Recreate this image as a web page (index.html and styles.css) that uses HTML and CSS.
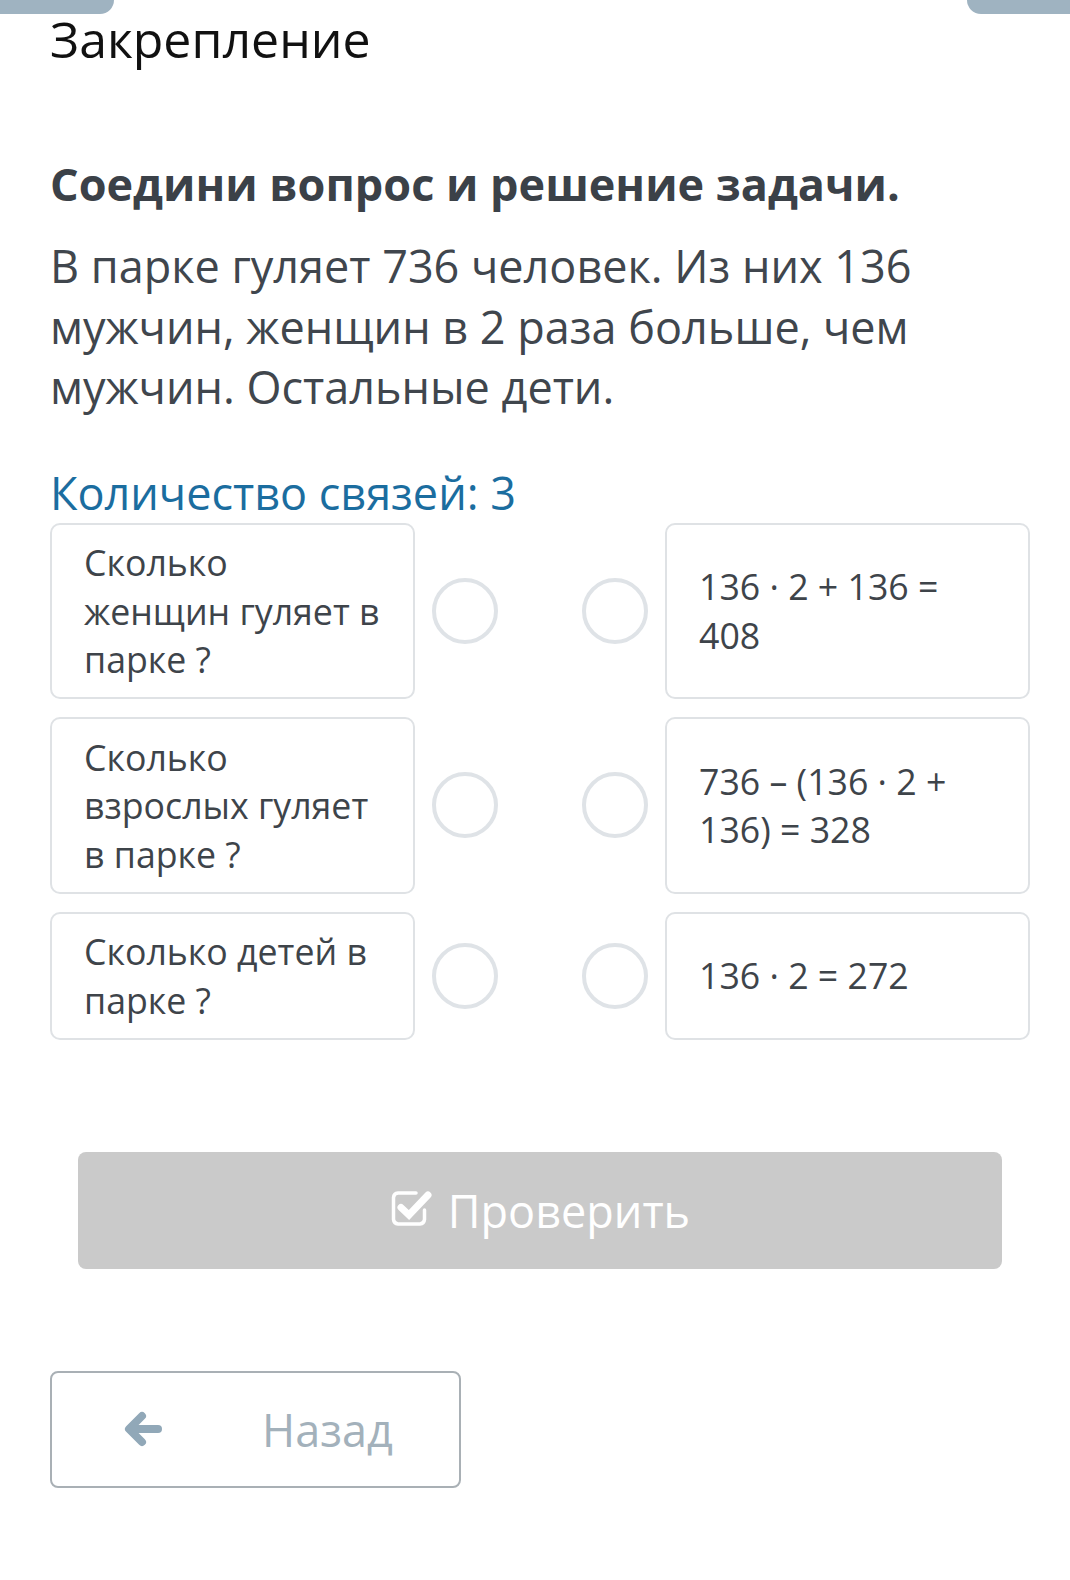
FILE: index.html
```html
<!DOCTYPE html>
<html lang="ru">
<head>
<meta charset="utf-8">
<title>Закрепление</title>
<link rel="stylesheet" href="styles.css">
</head>
<body>
<div class="tabs">
  <div class="tab tab-left"></div>
  <div class="tab tab-right"></div>
</div>
<main class="page">
  <h1 class="title">Закрепление</h1>
  <h2 class="task">Соедини вопрос и решение задачи.</h2>
  <p class="problem">В парке гуляет 736 человек. Из них 136 мужчин, женщин в 2 раза больше, чем мужчин. Остальные дети.</p>
  <div class="count">Количество связей: 3</div>

  <div class="pairs">
    <div class="pair">
      <div class="card card-q">Сколько<br>женщин гуляет в<br>парке ?</div>
      <div class="dots"><span class="dot"></span><span class="dot"></span></div>
      <div class="card card-a">136 · 2 + 136 =<br>408</div>
    </div>
    <div class="pair">
      <div class="card card-q">Сколько<br>взрослых гуляет<br>в парке ?</div>
      <div class="dots"><span class="dot"></span><span class="dot"></span></div>
      <div class="card card-a">736 – (136 · 2 +<br>136) = 328</div>
    </div>
    <div class="pair">
      <div class="card card-q">Сколько детей в<br>парке ?</div>
      <div class="dots"><span class="dot"></span><span class="dot"></span></div>
      <div class="card card-a">136 · 2 = 272</div>
    </div>
  </div>

  <div class="check-wrap">
    <button class="check-btn" type="button">
      <svg class="check-icon" width="44" height="40" viewBox="0 0 44 40" aria-hidden="true">
        <path d="M26 5 H8 A5 5 0 0 0 3.5 9.5 V31.5 A5 5 0 0 0 8 36 H30 A5 5 0 0 0 34.5 31.5 V22" fill="none" stroke="#ffffff" stroke-width="3.5" stroke-linecap="round"/>
        <path d="M11 19.5 L19 27 L38 7" fill="none" stroke="#ffffff" stroke-width="7" stroke-linecap="round" stroke-linejoin="miter"/>
      </svg>
      <span>Проверить</span>
    </button>
  </div>

  <button class="back-btn" type="button">
    <svg class="back-icon" width="40" height="36" viewBox="0 0 40 36" aria-hidden="true">
      <path d="M18 5 L5 18 L18 31" fill="none" stroke="#91a8b8" stroke-width="8" stroke-linecap="round" stroke-linejoin="round"/>
      <path d="M7 18 H34" fill="none" stroke="#91a8b8" stroke-width="8" stroke-linecap="round"/>
    </svg>
    <span>Назад</span>
  </button>
</main>
</body>
</html>
```

FILE: styles.css
```css
html, body {
  margin: 0;
  padding: 0;
  background: #ffffff;
}

body {
  font-family: "Open Sans", "Noto Sans", sans-serif;
  color: #3d434a;
}

.tabs {
  display: flex;
  justify-content: space-between;
  height: 14px;
}

.tab {
  height: 14px;
  background: #9fb3c1;
}

.tab-left {
  width: 114px;
  border-radius: 0 0 14px 0;
}

.tab-right {
  width: 103px;
  border-radius: 0 0 0 14px;
}

.page {
  padding: 0 40px 0 50px;
}

.title {
  margin: 2px 0 0;
  font-size: 50px;
  line-height: 46px;
  font-weight: 400;
  color: #111111;
}

.task {
  margin: 92px 0 0;
  font-size: 45px;
  line-height: 60px;
  font-weight: 700;
  color: #3b4148;
}

.problem {
  margin: 22px 0 0;
  font-size: 45px;
  line-height: 60.5px;
  color: #40464d;
}

.count {
  margin: 45px 0 0;
  font-size: 45px;
  line-height: 60px;
  color: #1b6d9f;
}

.pairs {
  margin-top: 0;
  display: flex;
  flex-direction: column;
  gap: 18px;
}

.pair {
  display: flex;
  align-items: stretch;
}

.card {
  box-sizing: border-box;
  width: 365px;
  border: 2px solid #dfe2e5;
  border-radius: 10px;
  font-size: 35.7px;
  line-height: 48.5px;
  color: #3e444a;
}

.card-q {
  padding: 13.5px 16px 13.5px 32px;
}

.card-a {
  padding: 13.5px 16px 13.5px 32px;
  display: flex;
  align-items: center;
}

.dots {
  flex: 1;
  display: flex;
  align-items: center;
  justify-content: space-between;
  padding: 0 17px;
}

.dot {
  box-sizing: border-box;
  width: 66px;
  height: 66px;
  border: 4px solid #dfe3e7;
  border-radius: 50%;
}

.check-wrap {
  margin-top: 112px;
  padding: 0 28px;
}

.check-btn {
  width: 100%;
  height: 117px;
  border: none;
  border-radius: 8px;
  background: #cacaca;
  color: #ffffff;
  font-family: "Open Sans", "Noto Sans", sans-serif;
  font-size: 45px;
  display: flex;
  align-items: center;
  justify-content: center;
  gap: 14px;
  padding: 0;
}

.check-icon {
  display: block;
  margin-top: -4px;
}

.back-btn {
  margin-top: 102px;
  box-sizing: border-box;
  width: 411px;
  height: 117px;
  border: 2px solid #a9b0b5;
  border-radius: 8px;
  background: #ffffff;
  color: #a3b1bb;
  font-family: "Open Sans", "Noto Sans", sans-serif;
  font-size: 45px;
  display: flex;
  align-items: center;
  padding: 0 0 0 72px;
}

.back-icon {
  display: block;
}

.back-btn span {
  margin-left: 98px;
}
```
